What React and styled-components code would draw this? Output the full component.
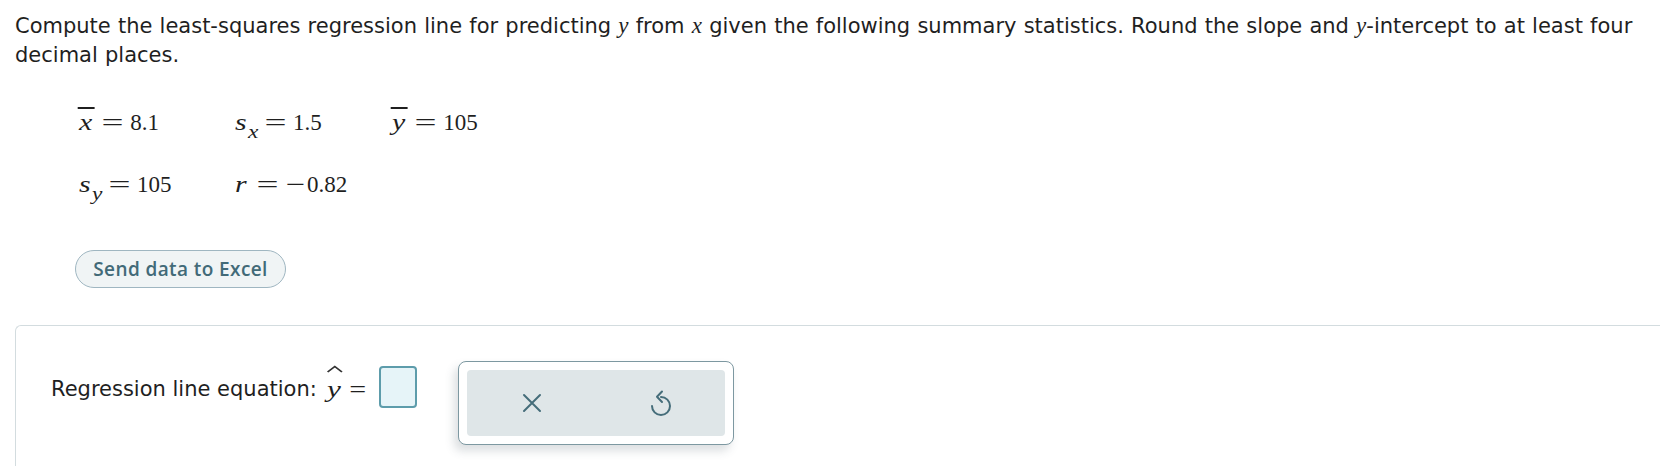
import React from 'react';
import styled, { createGlobalStyle } from 'styled-components';

const GlobalStyle = createGlobalStyle`
  html, body {
    margin: 0;
    padding: 0;
    background: #ffffff;
  }
  body {
    font-family: "DejaVu Sans", Verdana, sans-serif;
    color: #1f1f1f;
    overflow: hidden;
  }
`;

const Page = styled.div`
  width: 1660px;
  height: 466px;
  overflow: hidden;
`;

const Question = styled.p`
  margin: 0;
  padding: 12px 0 0 15px;
  font-size: 21px;
  line-height: 29px;
  word-spacing: 0.5px;
`;

const Var = styled.span`
  font-family: "Liberation Serif", "Times New Roman", serif;
  font-style: italic;
  font-size: 23px;
  line-height: 1;
`;

const StatsGrid = styled.div`
  display: grid;
  grid-template-columns: 156px 157px 160px;
  grid-auto-rows: 62px;
  margin-top: 22px;
  padding-left: 79px;
  font-family: "Liberation Serif", "Times New Roman", serif;
  font-size: 23px;
  color: #1f1f1f;
`;

const Stat = styled.div`
  white-space: nowrap;
  line-height: 62px;
`;

// math italic letters are wider than Times italic, so stretch them a bit
const Mi = styled.i`
  display: inline-block;
  position: relative;
  font-style: italic;
  transform: scaleX(1.3);
  transform-origin: 0 50%;
  margin-right: 3px;
  line-height: 1;

  ${(p) =>
    p.$bar &&
    `
    &::before {
      content: '';
      position: absolute;
      left: -1px;
      right: -2px;
      top: -4px;
      height: 1.6px;
      background: #1f1f1f;
    }
  `}
`;

const Sub = styled(Mi)`
  font-size: 18px;
  position: relative;
  top: 8px;
  margin-left: 1px;
  margin-right: -1px;
`;

const Op = styled.span`
  display: inline-block;
  transform: scaleX(${(p) => (p.$minus ? 1.5 : 1.7)});
  margin: ${(p) => (p.$minus ? '0 5px 0 4px' : '0 11px 0 14px')};
`;

const ExcelButton = styled.button`
  display: block;
  margin: 34px 0 0 75px;
  height: 38px;
  width: 211px;
  padding: 0;
  border-radius: 19px;
  border: 1px solid #9fb6c1;
  background: #f0f4f5;
  color: #426a78;
  font-family: "Open Sans", "Noto Sans", sans-serif;
  font-weight: 600;
  font-size: 19px;
  letter-spacing: 0.4px;
`;

const AnswerPanel = styled.div`
  margin: 37px 0 0 15px;
  height: 200px;
  border: 1px solid #d3dcdf;
  border-right: none;
  border-radius: 6px 0 0 0;
  display: flex;
  align-items: flex-start;
  padding: 35px 0 0 35px;
  box-sizing: border-box;
`;

const EquationRow = styled.div`
  display: flex;
  align-items: center;
  height: 42px;
  margin-top: 5px;
  font-size: 21px;
`;

const Label = styled.span`
  margin-top: 4px;
  margin-right: 10px;
`;

const HatVar = styled(Mi)`
  font-family: "Liberation Serif", "Times New Roman", serif;
  font-size: 24px;
  margin-top: 4px;
`;

const Hat = styled.svg`
  position: absolute;
  left: -1px;
  top: -12px;
`;

const MathEq = styled.span`
  display: inline-block;
  font-family: "Liberation Serif", "Times New Roman", serif;
  font-size: 24px;
  transform: scaleX(1.25);
  margin: 4px 15px 0 10px;
`;

const InputBox = styled.div`
  width: 38px;
  height: 42px;
  box-sizing: border-box;
  border: 2px solid #5d9cab;
  border-radius: 4px;
  background: #e6f4f8;
`;

const ToolBox = styled.div`
  margin-left: 41px;
  width: 276px;
  height: 84px;
  box-sizing: border-box;
  padding: 8px;
  border: 1px solid #7d98a1;
  border-radius: 8px;
  background: #ffffff;
  box-shadow: -4px 6px 10px rgba(60, 80, 90, 0.18);
`;

const ToolInner = styled.div`
  height: 100%;
  border-radius: 4px;
  background: #dfe6e8;
  display: flex;
  align-items: center;
  justify-content: space-around;
`;

const IconButton = styled.span`
  display: flex;
  align-items: center;
  justify-content: center;
  width: 40px;
  height: 40px;
  color: #456d7a;
`;

export default function App() {
  return (
    <Page>
      <GlobalStyle />
      <Question>
        Compute the least-squares regression line for predicting <Var>y</Var> from <Var>x</Var> given the following summary statistics. Round the slope and <Var>y</Var>-intercept to at least four<br />
        decimal places.
      </Question>
      <StatsGrid>
        <Stat><Mi $bar>x</Mi><Op>=</Op>8.1</Stat>
        <Stat><Mi>s</Mi><Sub>x</Sub><Op>=</Op>1.5</Stat>
        <Stat><Mi $bar>y</Mi><Op>=</Op>105</Stat>
        <Stat><Mi>s</Mi><Sub>y</Sub><Op>=</Op>105</Stat>
        <Stat><Mi>r</Mi><Op>=</Op><Op $minus>−</Op>0.82</Stat>
      </StatsGrid>
      <ExcelButton>Send data to Excel</ExcelButton>
      <AnswerPanel>
        <EquationRow>
          <Label>Regression line equation:</Label>
          <HatVar>
            y
            <Hat width="14" height="8" viewBox="0 0 14 8">
              <path d="M1.5 7 L7 1.5 L12.5 7" fill="none" stroke="#333" strokeWidth="1.5" />
            </Hat>
          </HatVar>
          <MathEq>=</MathEq>
          <InputBox />
        </EquationRow>
        <ToolBox>
          <ToolInner>
            <IconButton>
              <svg width="20" height="20" viewBox="0 0 20 20">
                <path d="M2 2 L18 18 M18 2 L2 18" stroke="currentColor" strokeWidth="2" strokeLinecap="round" />
              </svg>
            </IconButton>
            <IconButton>
              <svg width="22" height="27" viewBox="0 0 22 27">
                <path d="M11 7 A9 9 0 1 1 2 16" fill="none" stroke="currentColor" strokeWidth="2" strokeLinecap="round" />
                <path d="M12 1.5 L7 6.8 L12 12" fill="none" stroke="currentColor" strokeWidth="2" strokeLinecap="round" strokeLinejoin="round" />
              </svg>
            </IconButton>
          </ToolInner>
        </ToolBox>
      </AnswerPanel>
    </Page>
  );
}
